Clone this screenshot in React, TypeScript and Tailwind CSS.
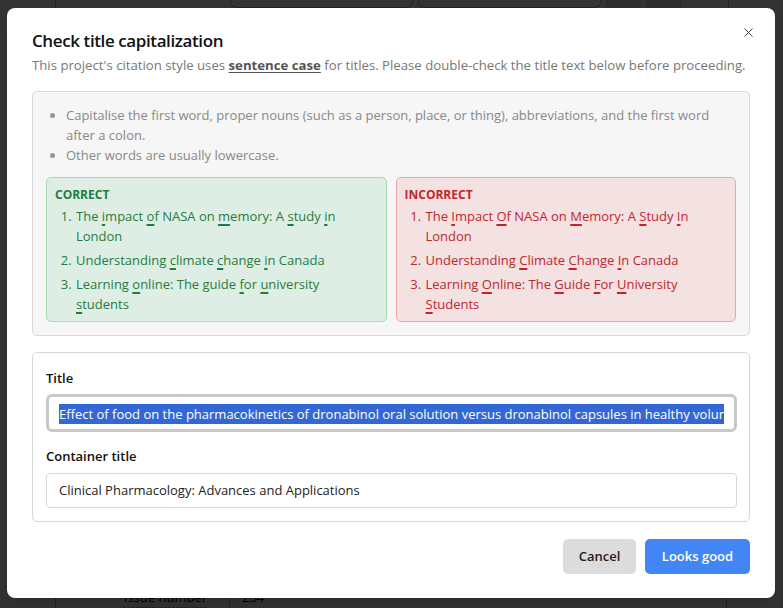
import { X } from 'lucide-react';

const sans = { fontFamily: '"Open Sans", "Noto Sans", Arial, sans-serif' };

type Part = string | { u: string };

const correct: Part[][] = [
  ['The ', { u: 'i' }, 'mpact ', { u: 'o' }, 'f NASA on ', { u: 'm' }, 'emory: A ', { u: 's' }, 'tudy ', { u: 'i' }, 'n London'],
  ['Understanding ', { u: 'c' }, 'limate ', { u: 'c' }, 'hange ', { u: 'i' }, 'n Canada'],
  ['Learning ', { u: 'o' }, 'nline: The guide ', { u: 'f' }, 'or ', { u: 'u' }, 'niversity ', { u: 's' }, 'tudents'],
];

const incorrect: Part[][] = [
  ['The ', { u: 'I' }, 'mpact ', { u: 'O' }, 'f NASA on ', { u: 'M' }, 'emory: A ', { u: 'S' }, 'tudy ', { u: 'I' }, 'n London'],
  ['Understanding ', { u: 'C' }, 'limate ', { u: 'C' }, 'hange ', { u: 'I' }, 'n Canada'],
  ['Learning ', { u: 'O' }, 'nline: The ', { u: 'G' }, 'uide ', { u: 'F' }, 'or ', { u: 'U' }, 'niversity ', { u: 'S' }, 'tudents'],
];

function Example({ parts }: { parts: Part[] }) {
  return (
    <li className="pl-[1px]">
      {parts.map((p, i) =>
        typeof p === 'string' ? (
          <span key={i}>{p}</span>
        ) : (
          <span key={i} className="underline decoration-2 underline-offset-[3px]">
            {p.u}
          </span>
        )
      )}
    </li>
  );
}

function ExampleBox({ tone, label, items }: { tone: 'good' | 'bad'; label: string; items: Part[][] }) {
  const boxClass =
    tone === 'good'
      ? 'border-[#a6d8b4] bg-[#dfeee4] text-[#1f7d3d]'
      : 'border-[#eba7a7] bg-[#f4e1e1] text-[#c0262e]';
  return (
    <div className={`rounded-[5px] border pl-[8px] pr-3 pt-[8px] pb-[7px] ${boxClass}`}>
      <div className="text-[12px] font-bold leading-[18px]">{label}</div>
      <ol className="mt-[2px] flex list-decimal flex-col gap-1 pl-[20px] text-[13px] leading-[20px]">
        {items.map((parts, i) => (
          <Example key={i} parts={parts} />
        ))}
      </ol>
    </div>
  );
}

function BackgroundPage() {
  return (
    <div className="flex h-[608px] w-[783px] flex-col bg-white" style={{ fontFamily: '"Liberation Serif", serif' }}>
      <div className="ml-[55px] flex h-[8px] border-l border-[#aaa]">
        <div className="w-[174px]" />
        <div className="w-[183px] rounded-b-md border border-t-0 border-[#aaa]" />
        <div className="ml-[5px] w-[183px] rounded-b-md border border-t-0 border-[#aaa]" />
        <div className="ml-[5px] w-[35px] bg-[#ddd]" />
        <div className="ml-[5px] w-[35px] bg-[#ddd]" />
        <div className="ml-[47px] border-l border-[#aaa]" />
      </div>
      <div className="flex flex-1">
        <div className="ml-[55px] w-[672px] border-x border-[#aaa]" />
        <div className="flex flex-col gap-[4px] pl-[29px] pt-[30px] text-[15px] leading-[16px] text-black">
          <i>al</i>
          <span>0</span>
          <span className="mt-[30px]">F</span>
          <i>ai</i>
          <span>0.2</span>
          <span className="mt-[14px]">a</span>
          <span>.</span>
          <span>d</span>
          <span className="mt-[36px]">le</span>
          <i>/ I</i>
          <span className="mt-[30px]">dr</span>
          <i>Pl</i>
          <span className="mt-[32px]">d</span>
          <span>ol</span>
        </div>
      </div>
      <div className="ml-[55px] flex h-[20px] w-[672px] border-x border-[#aaa] text-[13px]" style={sans}>
        <div className="flex w-[174px] justify-end border-r border-[#aaa] pr-[22px]">
          <span className="border-b border-dotted border-[#777]">Issue number</span>
        </div>
        <div className="pl-[12px]">254</div>
      </div>
    </div>
  );
}

export default function App() {
  return (
    <div className="relative h-[608px] w-[783px] overflow-hidden" style={sans}>
      <BackgroundPage />
      <div className="absolute inset-0 bg-black/80">
        <div className="relative ml-[7px] mt-[8px] h-[590px] w-[768px] rounded-[8px] bg-white px-[25px] pt-[22px] shadow-lg">
          <button className="absolute right-[15px] top-[13px] p-1 text-[#333]">
            <X size={15} strokeWidth={1.5} />
          </button>

          <h2 className="text-[17px] font-semibold leading-[22px] tracking-[-0.4px] text-[#111]">
            Check title capitalization
          </h2>
          <p className="mt-[3px] whitespace-nowrap text-[13.2px] leading-[20px] text-[#777]">
            This project's citation style uses{' '}
            <span className="font-bold text-[#555] underline underline-offset-2">sentence case</span> for titles. Please
            double-check the title text below before proceeding.
          </p>

          <div className="mt-4 rounded-[5px] border border-[#d8d8d8] bg-[#f6f6f6] px-[13px] pt-[13px] pb-[13px]">
            <ul className="list-disc pl-[20px] text-[13px] leading-[20px] text-[#888] marker:text-[#999]">
              <li>
                Capitalise the first word, proper nouns (such as a person, place, or thing), abbreviations, and the first word
                after a colon.
              </li>
              <li>Other words are usually lowercase.</li>
            </ul>
            <div className="mt-3 grid grid-cols-2 gap-[9px]">
              <ExampleBox tone="good" label="CORRECT" items={correct} />
              <ExampleBox tone="bad" label="INCORRECT" items={incorrect} />
            </div>
          </div>

          <div className="mt-[16px] rounded-[5px] border border-[#d8d8d8] pl-[13px] pr-[12px] pt-[16px] pb-[13px]">
            <label className="block text-[13px] font-semibold leading-[18px] text-[#111]">Title</label>
            <div className="mt-[7px] flex h-[38px] items-center overflow-hidden rounded-[6px] border-[3px] border-[#c8c8c8] px-[10px]">
              <div className="overflow-hidden whitespace-nowrap">
                <span className="bg-[#3367d6] py-[1px] text-[13px] leading-[18px] text-white">
                  Effect of food on the pharmacokinetics of dronabinol oral solution versus dronabinol capsules in healthy volunteers
                </span>
              </div>
            </div>

            <label className="mt-[15px] block text-[13px] font-semibold leading-[18px] text-[#111]">Container title</label>
            <div className="mt-[8px] flex h-[35px] items-center rounded-[4px] border border-[#d8d8d8] px-[12px] text-[13px] text-[#222]">
              Clinical Pharmacology: Advances and Applications
            </div>
          </div>

          <div className="mt-[17px] flex justify-end gap-[9px]">
            <button className="h-[35px] w-[73px] rounded-[5px] bg-[#dcdcdc] text-[13px] font-semibold text-[#222]">
              Cancel
            </button>
            <button className="h-[35px] w-[105px] rounded-[5px] bg-[#4285f4] text-[13px] font-semibold text-white">
              Looks good
            </button>
          </div>
        </div>
      </div>
    </div>
  );
}
